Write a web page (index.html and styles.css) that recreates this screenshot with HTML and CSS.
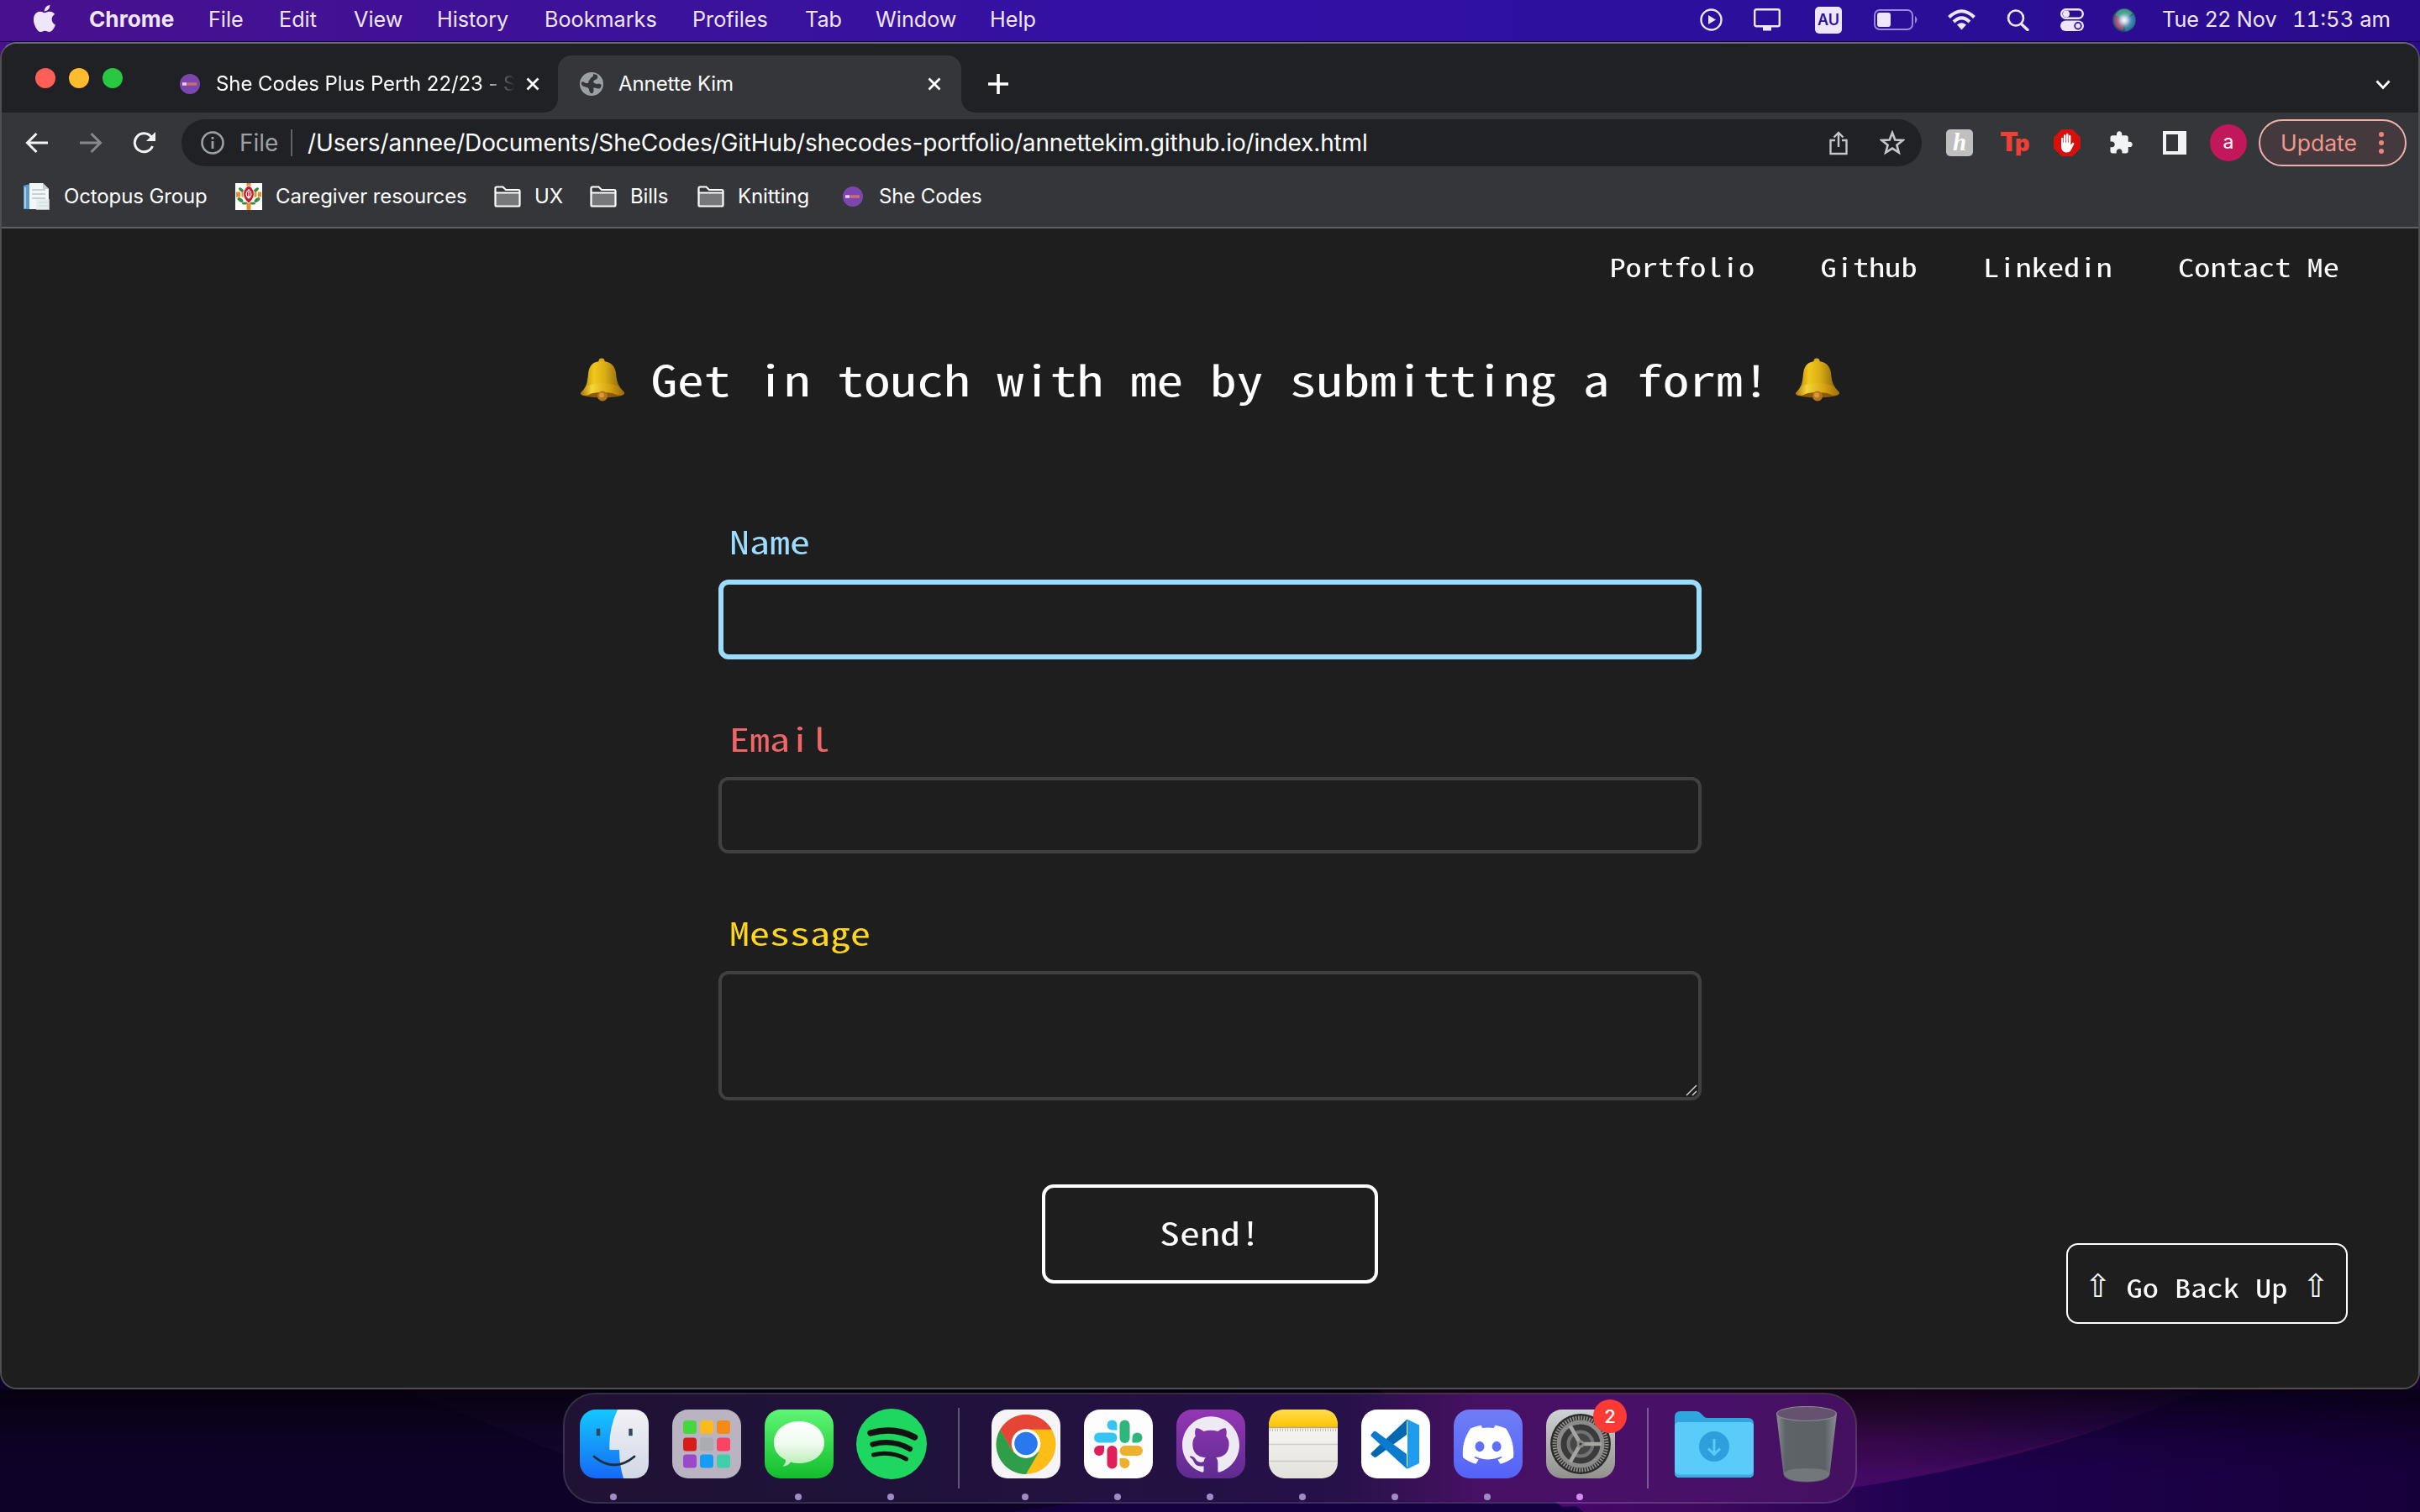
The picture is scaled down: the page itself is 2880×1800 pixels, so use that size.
FILE: index.html
```html
<!DOCTYPE html>
<html lang="en">
<head>
<meta charset="utf-8">
<title>Annette Kim</title>
<link rel="stylesheet" href="styles.css">
</head>
<body>
<svg width="0" height="0" class="defs" aria-hidden="true">
  <defs>
    <linearGradient id="bellBody" x1="0" x2="1"><stop offset="0" stop-color="#a87c0a"/><stop offset=".3" stop-color="#f0c81c"/><stop offset=".55" stop-color="#dcae16"/><stop offset="1" stop-color="#7c5606"/></linearGradient>
    <linearGradient id="bellRim" x1="0" x2="1"><stop offset="0" stop-color="#a87408"/><stop offset=".25" stop-color="#f6d53a"/><stop offset=".65" stop-color="#d8a412"/><stop offset="1" stop-color="#9a6c08"/></linearGradient>
    <symbol id="bell" viewBox="0 0 54 52">
      <circle cx="26" cy="4" r="3.600" fill="#d8a81a"/>
      <ellipse cx="27" cy="42.500" rx="26" ry="5" fill="#8a5a08"/>
      <path d="M26 4C37 4 42 10 43 18C44 28 45 33 53 41C52 45 46 44 43 44C38 39 16 39 11 44C7 45 2 45 1 42C9 34 9 28 10 19C11 9 16 4 26 4Z" fill="url(#bellBody)"/>
      <path d="M8 34C18 29 36 29 46 34L53 41C53 45 47 45 44 44C38 40 16 40 10 44C6 45 1 45 1 42Z" fill="url(#bellRim)"/>
      <circle cx="27" cy="45.500" r="6" fill="#b4741c"/><circle cx="26" cy="44.500" r="3" fill="#d89a3c"/>
    </symbol>
    <symbol id="shecodes" viewBox="0 0 24 24"><circle cx="12" cy="12" r="12" fill="#7d46ae"/><path d="M3 12h5" stroke="#e6d4f2" stroke-width="3.400"/><path d="M8.500 12H20" stroke="#c8706e" stroke-width="3.400"/></symbol>
    <symbol id="folder" viewBox="0 0 32 26"><path d="M1.500 8V3Q1.500 1.500 3 1.500H10.500L14 5H29Q30.500 5 30.500 6.500V8" fill="none" stroke="#fff" stroke-width="2.200"/><path d="M1.500 8.500H30.500V23Q30.500 24.500 29 24.500H3Q1.500 24.500 1.500 23Z" fill="#77787a" stroke="#fff" stroke-width="2.200"/></symbol>
    <symbol id="close" viewBox="0 0 16 16"><path d="M1.500 1.500L14.500 14.500M14.500 1.500L1.500 14.500" stroke="#fff" stroke-width="2.800"/></symbol>
    <radialGradient id="siri"><stop offset="0" stop-color="#fff"/><stop offset=".35" stop-color="#d3e6f0" stop-opacity=".8"/><stop offset="1" stop-color="#4f86a8" stop-opacity="0"/></radialGradient>
    <linearGradient id="gFinder" x2="0" y2="1"><stop offset="0" stop-color="#14c8ff"/><stop offset="1" stop-color="#1669f6"/></linearGradient>
    <linearGradient id="gFinderR" x2="0" y2="1"><stop offset="0" stop-color="#f2f1f5"/><stop offset="1" stop-color="#d0d9e6"/></linearGradient>
    <linearGradient id="gMsg" x2="0" y2="1"><stop offset="0" stop-color="#5ff675"/><stop offset="1" stop-color="#12bd2c"/></linearGradient>
    <linearGradient id="gBubble" x2="0" y2="1"><stop offset="0" stop-color="#fff"/><stop offset=".5" stop-color="#effbee"/><stop offset="1" stop-color="#b6ecb2"/></linearGradient>
    <linearGradient id="gGit" x2="0" y2="1"><stop offset="0" stop-color="#9436b4"/><stop offset="1" stop-color="#5e2c90"/></linearGradient>
    <linearGradient id="gNote" x2="0" y2="1"><stop offset="0" stop-color="#ffdc50"/><stop offset="1" stop-color="#fcc400"/></linearGradient>
    <linearGradient id="gPaper" x2="0" y2="1"><stop offset="0" stop-color="#fbfbfa"/><stop offset="1" stop-color="#e4e1db"/></linearGradient>
    <linearGradient id="gDisc" x2="0" y2="1"><stop offset="0" stop-color="#6f7ef6"/><stop offset="1" stop-color="#5463f8"/></linearGradient>
    <linearGradient id="gSet" x2="0" y2="1"><stop offset="0" stop-color="#cfd3d3"/><stop offset="1" stop-color="#92918e"/></linearGradient>
    <linearGradient id="gTrash" x2="1"><stop offset="0" stop-color="#8a8e94"/><stop offset=".15" stop-color="#5d6368"/><stop offset=".8" stop-color="#5b6165"/><stop offset="1" stop-color="#888d90"/></linearGradient>
    <linearGradient id="wUpper" x2="0" y2="1"><stop offset="0" stop-color="#340a3e"/><stop offset="1" stop-color="#480870"/></linearGradient>
    <linearGradient id="wFade"><stop offset="0" stop-color="#1c0150" stop-opacity="0"/><stop offset="1" stop-color="#1a0450" stop-opacity="1"/></linearGradient>
    <linearGradient id="wLower"><stop offset="0" stop-color="#480670"/><stop offset=".3" stop-color="#40085f"/><stop offset=".52" stop-color="#1f0150"/><stop offset="1" stop-color="#16003a"/></linearGradient>
    <linearGradient id="wShade" x2="0" y2="1"><stop offset="0" stop-opacity=".62"/><stop offset=".6" stop-opacity=".15"/><stop offset="1" stop-opacity="0"/></linearGradient>
  </defs>
</svg>

<header class="menubar">
  <svg class="apple" viewBox="2.300 0 19.500 24"><path fill="#efe6fb" d="M12.152 6.896c-.948 0-2.415-1.078-3.960-1.040-2.040.027-3.910 1.183-4.961 3.014-2.117 3.675-.546 9.103 1.519 12.090 1.013 1.454 2.208 3.090 3.792 3.039 1.520-.065 2.090-.987 3.935-.987 1.831 0 2.350.987 3.960.948 1.637-.026 2.676-1.480 3.676-2.948 1.156-1.688 1.636-3.325 1.662-3.415-.039-.013-3.182-1.221-3.220-4.857-.026-3.040 2.480-4.494 2.597-4.559-1.429-2.090-3.623-2.324-4.390-2.376-2-.156-3.675 1.090-4.610 1.090zM15.530 3.830c.843-1.012 1.400-2.427 1.245-3.830-1.207.052-2.662.805-3.532 1.818-.780.896-1.454 2.338-1.273 3.714 1.338.104 2.715-.688 3.559-1.701"/></svg>
  <nav class="menus"><span class="app">Chrome</span><span>File</span><span>Edit</span><span>View</span><span>History</span><span>Bookmarks</span><span>Profiles</span><span>Tab</span><span>Window</span><span>Help</span></nav>
  <div class="status">
    <svg width="27" height="27" viewBox="0 0 27 27"><circle cx="13.500" cy="13.500" r="12" fill="none" stroke="#efe6fb" stroke-width="2.400"/><path d="M10 8L19 13.500L10 19Z" fill="#efe6fb"/></svg>
    <svg width="32" height="27" viewBox="0 0 32 27"><rect x="1.200" y="1.200" width="29.600" height="20" rx="2" fill="none" stroke="#efe6fb" stroke-width="2.400"/><path d="M11 26.500V22H21V26.500Z" fill="#efe6fb"/></svg>
    <b class="au">AU</b>
    <svg width="52" height="25" viewBox="0 0 52 25"><rect x="1" y="1" width="45" height="23" rx="6" fill="none" stroke="#9b86d8" stroke-width="2"/><rect x="4" y="4" width="16" height="17" rx="3" fill="#efe6fb"/><path d="M49 8Q54 12 49 17Z" fill="#9b86d8"/></svg>
    <svg width="33" height="25" viewBox="0 0 33 25"><g fill="none" stroke="#efe6fb" stroke-width="4"><path d="M1.500 9.500Q16.500 -5 31.500 9.500"/><path d="M7 15Q16.500 5.800 26 15"/></g><path d="M11 18.500Q16.500 14 22 18.500L16.500 24.500Z" fill="#efe6fb"/></svg>
    <svg width="28" height="26" viewBox="0 0 28 26"><circle cx="11" cy="10.500" r="9" fill="none" stroke="#efe6fb" stroke-width="2.600"/><path d="M17.500 17.500L25 24.500" stroke="#efe6fb" stroke-width="3.400" stroke-linecap="round"/></svg>
    <svg width="28" height="27" viewBox="0 0 28 27"><rect x="1.200" y="1.200" width="25.600" height="10.600" rx="5.300" fill="none" stroke="#efe6fb" stroke-width="2.400"/><circle cx="7" cy="6.500" r="4" fill="#efe6fb"/><rect y="14.500" width="28" height="12.500" rx="6.250" fill="#efe6fb"/><circle cx="21" cy="20.700" r="3.800" fill="none" stroke="#2f109a" stroke-width="1.800"/></svg>
    <svg width="28" height="28" viewBox="0 0 28 28"><circle cx="14" cy="14" r="14" fill="#2b5068"/><path d="M14 14L3 8Q8 -1 17 1Q22 3 24 6Z" fill="#3c9c84"/><path d="M14 14L25 7Q29 14 25 21Q20 27 15 27Z" fill="#2d78a8"/><path d="M14 14L13 26Q4 24 2 17Q1 12 3 8Z" fill="#a8406c"/><circle cx="14" cy="14" r="12" fill="url(#siri)"/></svg>
    <span>Tue 22 Nov</span><span class="clock">11:53 am</span>
  </div>
</header>

<main class="window">
  <div class="tabstrip">
    <div class="lights"><i class="red"></i><i class="amber"></i><i class="green"></i></div>
    <div class="tab idle"><svg class="fav" width="24" height="24"><use href="#shecodes"/></svg><span class="tabtext faded">She Codes Plus Perth 22/23 - S</span><svg width="16" height="16"><use href="#close"/></svg></div>
    <div class="tab active"><svg width="28" height="28" viewBox="0 0 28 28"><circle cx="14" cy="14" r="14" fill="#9aa0a6"/><path d="M16 2C17 6 12 6 12 9C9 10 12 14 8 13C5 13 4 10 2 12C1 17 6 17 8 18C12 18 10 22 13 25C17 26 17 21 16 19C19 17 22 22 25 18C27 14 24 13 20 14C16 13 15 11 18 9C22 8 22 5 20 3Z" fill="#35363a"/></svg><span class="tabtext">Annette Kim</span><svg width="16" height="16"><use href="#close"/></svg></div>
    <svg class="newtab" width="24" height="24" viewBox="0 0 24 24"><path d="M12 0V24M0 12H24" stroke="#fff" stroke-width="3.600"/></svg>
    <svg class="chev" width="18" height="12" viewBox="0 0 18 12"><path d="M1.500 1.500L9 9.500L16.500 1.500" fill="none" stroke="#fff" stroke-width="2.800"/></svg>
  </div>

  <div class="toolbar">
    <div class="navs">
      <svg width="28" height="26" viewBox="0 0 28 26"><path d="M27 13H3M13.500 2L2.500 13L13.500 24" fill="none" stroke="#f1f3f4" stroke-width="3"/></svg>
      <svg width="28" height="26" viewBox="0 0 28 26"><path d="M1 13H25M14.500 2L25.500 13L14.500 24" fill="none" stroke="#85888c" stroke-width="3"/></svg>
      <svg width="28" height="26" viewBox="0 0 28 26"><path d="M23.500 17A11 11 0 1 1 22 6" fill="none" stroke="#f1f3f4" stroke-width="3"/><path d="M27 0V11H16Z" fill="#f1f3f4"/></svg>
    </div>
    <div class="omnibox">
      <svg width="28" height="28" viewBox="0 0 28 28"><circle cx="14" cy="14" r="12.500" fill="none" stroke="#9aa0a6" stroke-width="2.600"/><path d="M14 12V21M14 7V9.800" stroke="#9aa0a6" stroke-width="2.800"/></svg>
      <span class="scheme">File</span><i class="rule"></i><span class="url">/Users/annee/Documents/SheCodes/GitHub/shecodes-portfolio/annettekim.github.io/index.html</span>
      <svg class="share" width="22" height="29" viewBox="0 0 22 29"><path d="M7 11H1.500V27H20.500V11H15M11 19V3M5.500 7.500L11 2L16.500 7.500" fill="none" stroke="#c4c7c9" stroke-width="2.400"/></svg>
      <svg class="star" width="30" height="30" viewBox="0 0 30 30"><path d="M15 3L18.300 11.500L27.500 12L20.400 17.700L22.800 26.600L15 21.600L7.200 26.600L9.600 17.700L2.500 12L11.700 11.500Z" fill="none" stroke="#c4c7c9" stroke-width="2.600"/></svg>
    </div>
    <div class="exts">
      <b class="honey">h</b>
      <b class="tp">T<span>p</span></b>
      <svg width="32" height="32" viewBox="0 0 32 32"><path d="M9.500 0H22.500L32 9.500V22.500L22.500 32H9.500L0 22.500V9.500Z" fill="#d8100c"/><path d="M9 10.500Q10.200 9 11.400 10.500V16H12V7Q13.200 5.500 14.400 7V16H15V5.500Q16.200 4 17.400 5.500V16H18V7.500Q19.200 6 20.400 7.500V18.500L22.600 16Q24.800 15.300 24.300 17.500L20.500 25Q18.500 28 14.500 27.500Q9 27 9 20Z" fill="#fff"/></svg>
      <svg width="30" height="30" viewBox="0 0 24 24"><path fill="#f1f3f4" d="M20.500 11H19V7c0-1.100-.9-2-2-2h-4V3.500C13 2.120 11.880 1 10.500 1S8 2.120 8 3.500V5H4c-1.100 0-1.990.9-1.990 2v3.800H3.500c1.490 0 2.700 1.210 2.700 2.700s-1.210 2.700-2.700 2.700H2V20c0 1.100.9 2 2 2h3.800v-1.500c0-1.490 1.210-2.700 2.700-2.700s2.700 1.210 2.700 2.700V22H17c1.100 0 2-.9 2-2v-4h1.500c1.380 0 2.500-1.120 2.500-2.500S21.880 11 20.500 11z"/></svg>
      <svg width="28" height="28" viewBox="0 0 28 28"><path fill="#f1f3f4" fill-rule="evenodd" d="M0 0H28V28H0ZM4 4V24H18V4Z"/></svg>
      <span class="avatar">a</span>
    </div>
    <div class="update"><span>Update</span><i></i><i></i><i></i></div>
  </div>

  <div class="bookmarks">
    <span class="bm"><svg width="32" height="32" viewBox="0 0 32 32"><path d="M0 3L8 1V31H0Z" fill="#5d9cc8"/><path d="M2 5V30" stroke="#a8cfe8" stroke-width="2"/><path d="M7 0H23L30 7V31H7Z" fill="#f4f7f8"/><path d="M23 0L30 7H23Z" fill="#c4cdd2"/><path d="M10 8H26M10 13H26M10 18H26M18 23H29M18 27H29" stroke="#b9c4c9" stroke-width="1.600"/><path d="M15 19H31V32H15Z" fill="#e3e9ec" opacity=".7"/></svg><span>Octopus Group</span></span>
    <span class="bm"><svg width="32" height="32" viewBox="0 0 32 32"><path d="M0 0H32V32H0Z" fill="#fff"/><path d="M16 0V32" stroke="#ee8a2c" stroke-width="5"/><path d="M1 13.500H31" stroke="#ee8a2c" stroke-width="6" stroke-dasharray="5 1.500"/><g fill="#3a8a3c"><ellipse cx="7" cy="8" rx="3.500" ry="1.800" transform="rotate(40 7 8)"/><ellipse cx="25" cy="8" rx="3.500" ry="1.800" transform="rotate(-40 25 8)"/><ellipse cx="6" cy="20" rx="4" ry="2" transform="rotate(35 6 20)"/><ellipse cx="26" cy="20" rx="4" ry="2" transform="rotate(-35 26 20)"/><ellipse cx="11" cy="24" rx="3" ry="1.600"/><ellipse cx="21" cy="24" rx="3" ry="1.600"/></g><path d="M16 3C24 7 25 17 16 24C7 17 8 7 16 3Z" fill="#c4202c" stroke="#fff"/><path d="M16 8C20 11 20 15 16 18C12 15 12 11 16 8ZM16 10V18" fill="none" stroke="#fff" stroke-width="1.200"/></svg><span>Caregiver resources</span></span>
    <span class="bm"><svg width="32" height="26"><use href="#folder"/></svg><span>UX</span></span>
    <span class="bm"><svg width="32" height="26"><use href="#folder"/></svg><span>Bills</span></span>
    <span class="bm"><svg width="32" height="26"><use href="#folder"/></svg><span>Knitting</span></span>
    <span class="bm wide"><svg width="24" height="24"><use href="#shecodes"/></svg><span>She Codes</span></span>
  </div>

  <section class="page">
    <nav class="site-nav"><a class="mono">Portfolio</a><a class="mono">Github</a><a class="mono">Linkedin</a><a class="mono">Contact Me</a></nav>
    <h1><svg width="54" height="52"><use href="#bell"/></svg><span class="mono">Get in touch with me by submitting a form!</span><svg width="54" height="52"><use href="#bell"/></svg></h1>
    <form class="contact">
      <label class="l-name mono">Name</label><input class="field focused" type="text">
      <label class="l-mail mono">Email</label><input class="field" type="text">
      <label class="l-msg mono">Message</label>
      <div class="area"><textarea class="field"></textarea><svg class="grip" width="14" height="14" viewBox="0 0 14 14"><path d="M1 13L13 1M8 13L13 8" stroke="#d0d0d0" stroke-width="1.500"/></svg></div>
      <button class="send" type="button"><span class="mono">Send!</span></button>
    </form>
    <a class="goup"><b>⇧</b><span class="mono">Go Back Up</span><b>⇧</b></a>
  </section>
</main>

<footer class="desktop">
  <svg class="wall" width="2880" height="146" viewBox="0 0 2880 146">
    <rect width="2880" height="146" fill="#0f0229"/>
    <path d="M480 0H700V90Z" fill="#150530"/>
    <path d="M1200 146L1400 120H1900V146Z" fill="#150140"/>
    <path d="M1640 0H2880V146H1885Q1850 120 1640 0Z" fill="url(#wLower)"/>
    <path d="M1640 0H2620Q2420 90 2150 125L1860 140Q1800 100 1640 0Z" fill="url(#wUpper)"/>
    <path d="M2250 104V0H2620Q2500 60 2250 104Z" fill="url(#wFade)" opacity=".75"/>
    <rect width="2880" height="100" fill="url(#wShade)"/>
  </svg>
  <div class="dock">
    <span class="item on"><svg viewBox="0 0 82 82"><rect width="82" height="82" rx="19" fill="url(#gFinder)"/><path d="M45 0H63Q82 0 82 19V63Q82 82 63 82H52Q47 66 47 48H35.500Q34 24 45 0Z" fill="url(#gFinderR)"/><path d="M22 25V29M60.500 25V29" stroke="#2e4a55" stroke-width="4.400" stroke-linecap="square"/><path d="M17 56Q41 76 65 56" fill="none" stroke="#1f2e3a" stroke-width="2.800" stroke-linecap="round"/></svg></span>
    <span class="item"><svg viewBox="0 0 82 82"><rect width="82" height="82" rx="19" fill="#b9b3c2"/><g><rect x="13" y="13" width="16" height="16" rx="3.500" fill="#45d83c"/><rect x="33" y="13" width="16" height="16" rx="3.500" fill="#fdbb1a"/><rect x="53" y="13" width="16" height="16" rx="3.500" fill="#f58a14"/><rect x="13" y="33.500" width="16" height="16" rx="3.500" fill="#d81c18"/><rect x="33" y="33.500" width="16" height="16" rx="3.500" fill="#a9adb2"/><rect x="53" y="33.500" width="16" height="16" rx="3.500" fill="#fb4362"/><rect x="13" y="53.500" width="16" height="16" rx="3.500" fill="#9c48cc"/><rect x="33" y="53.500" width="16" height="16" rx="3.500" fill="#149cf8"/><rect x="53" y="53.500" width="16" height="16" rx="3.500" fill="#3ccfa8"/></g></svg></span>
    <span class="item on"><svg viewBox="0 0 82 82"><rect width="82" height="82" rx="19" fill="url(#gMsg)"/><path d="M41 14C58 14 71 25 71 39.500C71 54 58 64 41 64Q35 64 31 62.500Q27 68 21.500 67.500Q25.500 63.500 25 60Q11 53 11 39.500C11 25 24 14 41 14Z" fill="url(#gBubble)"/></svg></span>
    <span class="item on"><svg class="spotify" viewBox="0 0 84 84"><circle cx="42" cy="42" r="42" fill="#1ed760"/><g fill="none" stroke="#121212" stroke-linecap="round"><path d="M17 29Q45 21 69.500 34" stroke-width="7.400"/><path d="M19.500 42.500Q43 36 64 48" stroke-width="6.200"/><path d="M20.500 55Q41 50 59.500 60" stroke-width="5"/></g></svg></span>
    <i class="sep"></i>
    <span class="item on"><svg viewBox="0 0 82 82"><rect width="82" height="82" rx="19" fill="#f5f4f6"/><circle cx="41" cy="41.500" r="35.500" fill="#fbbd16"/><path d="M10.300 23.700A35.500 35.500 0 0 1 71.700 23.700H41L25.600 50.400Z" fill="#e64436"/><path d="M10.300 23.700A35.500 35.500 0 0 0 41 77L56.400 50.400L41 58L25.600 50.400Z" fill="#2f9e4b"/><circle cx="41" cy="40.500" r="17.300" fill="#fff"/><circle cx="41" cy="40.500" r="13.800" fill="#2a78ee"/></svg></span>
    <span class="item on"><svg viewBox="0 0 82 82"><rect width="82" height="82" rx="19" fill="#fdfdfe"/><g fill="#36c5f0"><path d="M39.500 12.500V24.500H33.500A6 6 0 1 1 39.500 18.500Z" opacity="0"/><path d="M33.500 12.500A6 6 0 0 0 33.500 24.500H39.500V18.500A6 6 0 0 0 33.500 12.500Z"/><rect x="12" y="27.500" width="27.500" height="12" rx="6"/></g><g fill="#2eb67d"><rect x="42.500" y="12.500" width="12" height="27.500" rx="6"/><path d="M57.500 39.500V33.500A6 6 0 0 1 69.500 33.500A6 6 0 0 1 63.500 39.500Z"/></g><g fill="#e01e5a"><path d="M24 43V49A6 6 0 0 1 12 49A6 6 0 0 1 18 43Z"/><rect x="27.500" y="43" width="12" height="27.500" rx="6"/></g><g fill="#ecb22e"><rect x="42.500" y="43" width="27.500" height="12" rx="6"/><path d="M42.500 58H48.500A6 6 0 1 1 42.500 64Z"/></g></svg></span>
    <span class="item on"><svg viewBox="0 0 82 82"><rect width="82" height="82" rx="19" fill="url(#gGit)"/><path transform="translate(7 7.500) scale(2.833)" fill="#eeeaf4" d="M12 .297c-6.630 0-12 5.373-12 12 0 5.303 3.438 9.800 8.205 11.385.600.113.820-.258.820-.577 0-.285-.010-1.040-.015-2.040-3.338.724-4.042-1.610-4.042-1.610C4.422 18.070 3.633 17.700 3.633 17.700c-1.087-.744.084-.729.084-.729 1.205.084 1.838 1.236 1.838 1.236 1.070 1.835 2.809 1.305 3.495.998.108-.776.417-1.305.760-1.605-2.665-.300-5.466-1.332-5.466-5.930 0-1.310.465-2.380 1.235-3.220-.135-.303-.540-1.523.105-3.176 0 0 1.005-.322 3.300 1.230.960-.267 1.980-.399 3-.405 1.020.006 2.040.138 3 .405 2.280-1.552 3.285-1.230 3.285-1.230.645 1.653.240 2.873.120 3.176.765.840 1.230 1.910 1.230 3.220 0 4.610-2.805 5.625-5.475 5.920.420.360.810 1.096.810 2.220 0 1.606-.015 2.896-.015 3.286 0 .315.210.690.825.570C20.565 22.092 24 17.592 24 12.297c0-6.627-5.373-12-12-12"/></svg></span>
    <span class="item on"><svg viewBox="0 0 82 82"><rect width="82" height="82" rx="19" fill="url(#gPaper)"/><path d="M0 21V19Q0 0 19 0H63Q82 0 82 19V21Z" fill="url(#gNote)"/><path d="M0 21.500H82" stroke="#b2a68a" stroke-width="1.400"/><path d="M1 24.500H81" stroke="#bdbab4" stroke-width="3" stroke-dasharray="1 2"/><path d="M0 41.500H82M0 61.500H82" stroke="#cfccc8" stroke-width="1.400"/></svg></span>
    <span class="item on"><svg viewBox="0 0 82 82"><rect width="82" height="82" rx="19" fill="#fff"/><path d="M11.500 52L54 12V30L18 56.500Q16 57.500 14.500 56L11.500 53.500Z" fill="#0567b0"/><path d="M11.500 30L14.500 26.500Q16 25 18 26.500L54 53V70.500L11.500 31.500Z" fill="#0b7bcd"/><path d="M53 12.500Q54.500 11.500 56.500 12.500L69 18.500V64L56.500 70Q54.500 71 53 69.500Q55 69 55 66V16Q55 13.500 53 12.500Z" fill="#1f9cf0"/></svg></span>
    <span class="item on"><svg viewBox="0 0 82 82"><rect width="82" height="82" rx="19" fill="url(#gDisc)"/><path transform="translate(10.800 11.500) scale(2.520)" fill="#fff" d="M20.317 4.370a19.791 19.791 0 00-4.885-1.515.074.074 0 00-.079.037c-.211.375-.445.865-.608 1.250-1.845-.276-3.680-.276-5.487 0-.164-.393-.406-.874-.618-1.250a.077.077 0 00-.079-.037 19.736 19.736 0 00-4.885 1.515.070.070 0 00-.032.028C.533 9.046-.319 13.580.099 18.058a.082.082 0 00.031.056c2.053 1.508 4.041 2.423 5.993 3.029a.078.078 0 00.084-.028c.462-.630.873-1.295 1.226-1.994a.076.076 0 00-.042-.106c-.653-.248-1.274-.550-1.872-.892a.077.077 0 01-.008-.128c.126-.094.252-.192.372-.291a.074.074 0 01.078-.011c3.928 1.793 8.180 1.793 12.061 0a.074.074 0 01.079.010c.120.099.246.198.373.292a.077.077 0 01-.007.128 12.299 12.299 0 01-1.873.891.077.077 0 00-.041.107c.360.698.772 1.363 1.225 1.993a.076.076 0 00.084.029c1.961-.607 3.950-1.522 6.002-3.029a.077.077 0 00.031-.055c.500-5.177-.838-9.674-3.549-13.660a.061.061 0 00-.031-.029zM8.020 15.331c-1.183 0-2.157-1.086-2.157-2.419 0-1.333.956-2.419 2.157-2.419 1.211 0 2.176 1.095 2.157 2.419 0 1.333-.956 2.419-2.157 2.419zm7.975 0c-1.183 0-2.157-1.086-2.157-2.419 0-1.333.955-2.419 2.157-2.419 1.211 0 2.176 1.095 2.157 2.419 0 1.333-.946 2.419-2.157 2.419Z"/></svg></span>
    <span class="item on hot"><svg viewBox="0 0 82 82"><rect width="82" height="82" rx="19" fill="url(#gSet)"/><circle cx="41" cy="41" r="36" fill="#2c2c2c"/><circle cx="41" cy="41" r="31" fill="none" stroke="#8f8f8d" stroke-width="5" stroke-dasharray="1.800 1.446"/><circle cx="41" cy="41" r="26" fill="#3a3a3a" stroke="#8c8c8a" stroke-width="5"/><circle cx="41" cy="41" r="14.500" fill="#474747" stroke="#737371" stroke-width="4"/><path d="M41 41H66M41 41L28.500 19.300M41 41L28.500 62.700" stroke="#a5a5a2" stroke-width="4.600"/><circle cx="41" cy="41" r="4.500" fill="#8a8a88"/><circle cx="41" cy="41" r="1.600" fill="#333"/></svg><b class="badge">2</b></span>
    <i class="sep"></i>
    <span class="item"><svg class="dl" viewBox="0 0 94 80"><path d="M0 7Q0 0 7 0H25Q29 0 31.500 3L35.500 7Q37 8 39 8H87Q94 8 94 15V40H0Z" fill="#2fa6dd"/><path d="M0 18Q0 13 5 13H89Q94 13 94 18V73Q94 79 88 79H6Q0 79 0 73Z" fill="#5bccfa"/><path d="M0 71V73Q0 79 6 79H88Q94 79 94 73V71Q93 75.500 88 75.500H6Q1 75.500 0 71Z" fill="#38ade2"/><circle cx="47" cy="42" r="18" fill="#2f9fdc"/><path d="M47 33V51M40 44.500L47 51.500L54 44.500" fill="none" stroke="#5bccfa" stroke-width="3"/></svg></span>
    <span class="item"><svg class="trash" viewBox="0 0 72 91"><path d="M0 9L8.500 81Q10 90 36 90.500Q62 90 63.500 81L72 9Z" fill="url(#gTrash)"/><path d="M9 80Q12 74 36 74Q60 74 63 80Q62 89 36 89.500Q11 89 9 80Z" fill="#7a8084" opacity=".7"/><ellipse cx="36" cy="9" rx="35.500" ry="8.500" fill="#66526f" stroke="#868a8e" stroke-width="1.200"/></svg></span>
  </div>
</footer>
</body>
</html>
```
FILE: styles.css
```css
* { box-sizing: border-box; }
body {
  margin: 0; width: 2880px; height: 1800px; overflow: hidden;
  display: flex; flex-direction: column;
  background: linear-gradient(90deg, #48108e 0, #3a129c 30%, #3211a6 50%, #2b0f9a 75%, #2a0b8c 100%) top / 100% 80px no-repeat #0f0229;
  font-family: Inter, "Liberation Sans", sans-serif; color: #fff;
}
.defs { position: absolute; }
svg { flex: none; display: block; }
i { display: block; }

/* menu bar */
.menubar { height: 50px; flex: none; display: flex; align-items: center; padding-left: 40px; border-bottom: 1px solid #0c0433; font-size: 25.200px; color: #efe6fb; line-height: 46px; white-space: nowrap; }
.apple { width: 26px; height: 32px; margin-top: -6px; }
.menus { margin: -4px 0 0 40px; display: grid; grid-template-columns: 142px 84px 89px 99px 128px 176px 134px 84px 136px 80px; }
.app { font-weight: 700; font-size: 26.200px; }
.status { margin: -2px 0 0 auto; display: grid; align-items: center; grid-template-columns: 64px 73px 70px 88px 70px 64px 62px 59px 155px 152px; }
.status span { margin-top: -2px; }
.clock { font-variant-numeric: tabular-nums; font-size: 25.600px; }
.au { width: 32px; height: 32px; border-radius: 5px; background: #efe6fb; color: #2c109a; font-size: 18px; line-height: 32px; text-align: center; font-weight: 600; }

/* browser window */
.window { height: 1604px; flex: none; border: 2px solid #4f4f50; border-top-color: #6b6a72; border-radius: 20px; overflow: hidden; display: flex; flex-direction: column; background: #202124; position: relative; }
.tabstrip { height: 82px; display: flex; align-items: flex-end; background: #202124; font-size: 24px; }
.lights { display: flex; gap: 16px; width: 192px; padding-left: 40px; align-self: flex-start; padding-top: 29px; }
.lights i { width: 24px; height: 24px; border-radius: 50%; }
.red { background: #ff5f57; } .amber { background: #febc2e; } .green { background: #28c840; }
.tab { height: 68px; display: flex; align-items: center; }
.idle { width: 470px; padding: 0 22px 0 20px; }
.active { width: 480px; padding: 0 24px 0 26px; background: #35363a; border-radius: 16px 16px 0 0; position: relative; }
.active::before, .active::after { content: ""; position: absolute; bottom: 0; width: 16px; height: 16px; }
.active::before { left: -16px; background: radial-gradient(circle at 0 0, transparent 15.500px, #35363a 16px); }
.active::after { right: -16px; background: radial-gradient(circle at 100% 0, transparent 15.500px, #35363a 16px); }
.tabtext { flex: 1; margin-left: 18px; white-space: nowrap; line-height: 40px; letter-spacing: -.080px; }
.faded { margin-left: 19px; -webkit-mask: linear-gradient(90deg, #000 312px, transparent 356px); mask: linear-gradient(90deg, #000 312px, transparent 356px); }
.newtab { margin: 0 0 22px 32px; }
.chev { margin: 0 33px 27px auto; }

.toolbar { height: 72px; display: flex; align-items: center; background: #35363a; }
.navs { display: flex; gap: 36px; padding-left: 28px; width: 214px; }
.omnibox { width: 2071px; height: 56px; border-radius: 28px; background: #202124; display: flex; align-items: center; padding: 0 20px 0 23px; font-size: 28px; line-height: 56px; white-space: nowrap; }
.scheme { color: #9aa0a6; width: 61px; margin-left: 18px; }
.rule { width: 2px; height: 32px; background: #606367; }
.url { margin-left: 18px; letter-spacing: -.145px; }
.share { margin-left: auto; }
.star { margin-left: 38px; }
.exts { margin-left: 29px; display: grid; align-items: center; grid-template-columns: 64px 64px 65px 65px 56px 44px; }
.honey { width: 32px; height: 32px; border-radius: 5px; background: #bfbfbf; color: #fff; font: italic 700 29px/30px "Liberation Serif", serif; text-align: center; }
.tp { color: #ee4035; font-size: 32px; line-height: 34px; font-weight: 900; letter-spacing: -4px; }
.tp span { font-size: 27px; }
.avatar { height: 44px; border-radius: 50%; background: #c2185b; text-align: center; font-size: 23px; line-height: 42px; }
.update { position: relative; margin-left: 14px; width: 176px; height: 56px; border: 2px solid #eeb0aa; border-radius: 28px; background: #44393c; color: #f0988c; font-size: 26.500px; line-height: 52px; padding-left: 24px; }
.update i { position: absolute; right: 25px; top: 13px; width: 6px; height: 6px; border-radius: 50%; background: #ee8478; }
.update i:nth-of-type(2) { top: 23px; }
.update i:nth-of-type(3) { top: 33px; }

.bookmarks { height: 64px; padding: 0 0 9px 26px; background: #35363a; display: grid; grid-template-columns: 252px 308px 114px 128px 173px 300px; align-items: center; font-size: 24px; letter-spacing: -.120px; white-space: nowrap; }
.bm { display: flex; align-items: center; gap: 16px; line-height: 40px; }
.wide { gap: 19px; }

/* portfolio page */
.page { flex: 1; position: relative; border-top: 2px solid #5f6063; background: #1e1e1e; font-family: "Noto Sans Mono CJK SC", "Noto Sans Mono CJK JP", "Liberation Mono", monospace; }
/* squarer letterforms, flattened towards the baseline */
.mono { display: inline-block; transform: scaleY(.790); transform-origin: 50% calc(50% + .436em); }
.site-nav { display: flex; justify-content: flex-end; gap: 78.400px; padding: 11px 94px 0 0; font-size: 38.400px; line-height: 60px; }
h1 { margin: 61px 0 0; display: flex; justify-content: center; align-items: center; gap: 30.500px; font-size: 63.400px; font-weight: 400; line-height: 80px; white-space: nowrap; }
h1 svg { margin-top: 15px; }
.contact { width: 1170px; margin: 125px auto 0; display: flex; flex-direction: column; }
.contact label { font-size: 48px; line-height: 60px; padding-left: 13px; margin-bottom: 21px; }
.l-name { color: #9cdcfe; } .l-mail { color: #f16567; } .l-msg { color: #ffd61e; }
.field { display: block; width: 100%; height: 91px; background: transparent; border: 4px solid #404040; border-radius: 12px; outline: 0; resize: none; margin: 0 0 59px; }
.focused { height: 95px; border: 6px solid #9cdcfe; }
.area { position: relative; }
.area .field { height: 154px; margin: 0; }
.grip { position: absolute; right: 5px; bottom: 5px; }
.send { align-self: center; margin-top: 100px; width: 400px; height: 118px; border: 4px solid #fff; border-radius: 14px; background: transparent; color: #fff; font: 48px/60px "Noto Sans Mono CJK SC", "Noto Sans Mono CJK JP", monospace; padding: 0 0 14px; }
.goup { position: absolute; right: 84px; bottom: 76px; width: 335px; height: 96px; border: 2px solid #fff; border-radius: 14px; display: flex; justify-content: space-between; align-items: center; padding: 0 20px; font-size: 38.400px; line-height: 60px; }
.goup b { font: 38px/40px "DejaVu Sans", sans-serif; margin-top: 5px; }

/* dock */
.desktop { flex: 1; position: relative; display: flex; justify-content: center; padding-top: 4px; }
.wall { position: absolute; left: 0; top: 0; }
.dock { position: relative; width: 1540px; height: 132px; border: 2px solid rgba(255,255,255,.18); border-radius: 38px; background: linear-gradient(90deg, #1f1233 0, #20123c 30%, #261148 60%, #481064 71%, #481068 90%, #44105f 100%); background-clip: padding-box; display: flex; padding: 18px 18px 0; }
.item { position: relative; width: 82px; height: 82px; margin-right: 28px; display: flex; justify-content: center; flex: none; }
.item svg { width: 82px; height: 82px; }
.item .spotify { width: 84px; height: 84px; margin-top: -1px; }
.item .dl { width: 94px; height: 80px; margin: 2px 2px 0 0; }
.item .trash { width: 72px; height: 91px; margin: -4px 2px 0 0; }
.on::after { content: ""; position: absolute; left: 36px; top: 100px; width: 8px; height: 8px; border-radius: 50%; background: #a08cc4; }
.hot::after { background: #d38cf0; }
.sep { width: 2px; height: 96px; margin: -2px 38px 0 10px; background: rgba(255,255,255,.3); flex: none; }
.badge { position: absolute; left: 56px; top: -12px; width: 40px; height: 40px; border-radius: 50%; background: #fa3a34; font-size: 22px; line-height: 40px; text-align: center; font-weight: 500; }
```
